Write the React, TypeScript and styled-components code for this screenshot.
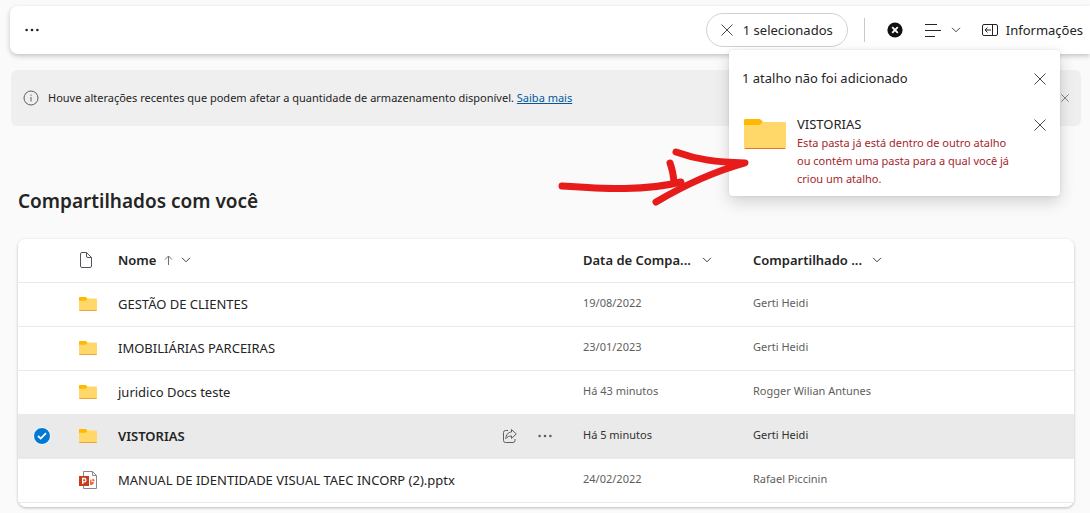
import React from "react";
import styled, { createGlobalStyle, css } from "styled-components";

const GlobalStyle = createGlobalStyle`
  * { box-sizing: border-box; }
  html { background: #fafafa; overflow-x: hidden; }
  body {
    margin: 0;
    color: #242424;
    font-family: "Segoe UI", "Noto Sans", "Open Sans", sans-serif;
    font-size: 13px;
    line-height: 20px;
  }
  button {
    border: 0;
    padding: 0;
    background: none;
    color: inherit;
    font: inherit;
    cursor: pointer;
  }
  svg { display: block; flex: none; }
`;

const Page = styled.div`
  padding: 6px 0 6px 10px;
`;

const Toolbar = styled.header`
  position: relative;
  z-index: 1;
  display: flex;
  align-items: center;
  justify-content: space-between;
  height: 48px;
  padding: 0 7px 0 14px;
  border-radius: 8px 0 0 8px;
  background: #fff;
  box-shadow: 0 2px 5px rgba(0, 0, 0, 0.22);
  white-space: nowrap;
`;

const ToolGroup = styled.div`
  display: flex;
  align-items: center;
`;

const ToolButton = styled.button<{ $gap?: number }>`
  display: flex;
  align-items: center;
  gap: ${({ $gap = 8 }) => $gap}px;
`;

const SelectionPill = styled(ToolButton)`
  height: 34px;
  padding: 0 14px;
  border: 1px solid #d1d1d1;
  border-radius: 17px;
`;

const Divider = styled.span`
  width: 1px;
  height: 24px;
  margin: 0 22px 0 16px;
  background: #c8c8c8;
`;

const ToolSet = styled(ToolGroup)`
  gap: 21px;
`;

const Popup = styled.section`
  position: absolute;
  top: 44px;
  right: 30px;
  width: 331px;
  padding: 18px 14px 8px 13px;
  border-radius: 4px;
  background: #fff;
  box-shadow: 0 6px 16px rgba(0, 0, 0, 0.16), 0 0 3px rgba(0, 0, 0, 0.1);
  white-space: normal;
`;

const PopupHeader = styled.div`
  display: flex;
  justify-content: space-between;
  align-items: flex-start;
  margin-bottom: 24px;
`;

const PopupTitle = styled.h2`
  margin: 0;
  font-size: 13px;
  font-weight: 400;
`;

const PopupItem = styled.div`
  display: flex;
  align-items: flex-start;
`;

const PopupThumb = styled.div`
  padding: 5px 0 0 2px;
`;

const PopupText = styled.div`
  flex: 1;
  min-width: 0;
  padding: 0 14px 0 11px;
`;

const ItemName = styled.p`
  margin: 0;
`;

const ErrorText = styled.p`
  margin: 0;
  color: #a4262c;
  font-size: 11px;
  line-height: 18px;
`;

const CloseButton = styled.button`
  display: flex;
  align-items: center;
  justify-content: center;
  height: 22px;
  color: #605e5c;
`;

const Arrow = styled.svg`
  position: absolute;
  top: 94px;
  left: -173px;
  pointer-events: none;
`;

const Banner = styled.aside`
  display: flex;
  align-items: center;
  gap: 9px;
  min-height: 56px;
  margin: 16px 9px 0 1px;
  padding: 0 12px;
  border-radius: 6px;
  background: #efefef;
  font-size: 11px;
  line-height: 16px;
`;

const BannerText = styled.p`
  flex: 1;
  margin: 0;
`;

const Link = styled.a`
  color: #005a9e;
  text-decoration: underline;
`;

const Title = styled.h1`
  margin: 61px 0 24px 8px;
  font-size: 19px;
  line-height: 28px;
  font-weight: 600;
`;

const Card = styled.main`
  margin: 0 16px 0 8px;
  padding-bottom: 4px;
  border-radius: 8px;
  overflow: hidden;
  background: #fff;
  box-shadow: 0 1px 3px rgba(0, 0, 0, 0.26);
`;

const Table = styled.table`
  width: 100%;
  table-layout: fixed;
  border-collapse: collapse;
  text-align: left;
`;

const Col = styled.col<{ $width?: number }>`
  ${({ $width }) => $width && css`width: ${$width}px;`}
`;

const Row = styled.tr<{ $selected?: boolean }>`
  height: 44px;
  border-bottom: 1px solid #ebebeb;
  background: ${({ $selected }) => ($selected ? "#eaeaea" : "#fff")};
  font-weight: ${({ $selected }) => ($selected ? 600 : 400)};
`;

const HeadRow = styled(Row)`
  height: 43px;
`;

const HeadCell = styled.th`
  padding: 0;
  font-weight: 600;
`;

const SortButton = styled.button`
  display: flex;
  align-items: center;
  gap: 8px;
  white-space: nowrap;
`;

const SortLabel = styled.span<{ $width?: number }>`
  ${({ $width }) => $width && css`width: ${$width}px;`}
  text-align: left;
`;

const Cell = styled.td`
  padding: 0;
`;

const NameLine = styled.div`
  display: flex;
  align-items: center;
  justify-content: space-between;
  padding-right: 30px;
  white-space: nowrap;
`;

const RowActions = styled.span`
  display: flex;
  align-items: center;
  gap: 20px;
  color: #605e5c;
`;

const MetaCell = styled(Cell)<{ $selected?: boolean }>`
  padding: 0 52px 2px 0;
  color: ${({ $selected }) => ($selected ? "#323130" : "#605e5c")};
  font-size: 11px;
  font-weight: 400;
  line-height: 18px;
  white-space: nowrap;
`;

const Clip = styled.div`
  overflow: hidden;
`;

const CheckLabel = styled.label`
  display: grid;
  width: 18px;
  height: 18px;
  margin-left: 15px;
  place-items: center;
  color: #fff;

  input, svg { grid-area: 1 / 1; }
  svg { z-index: 1; pointer-events: none; }
`;

const Checkbox = styled.input`
  appearance: none;
  width: 18px;
  height: 18px;
  margin: 0;
  border-radius: 50%;
  opacity: 0;

  &:checked {
    border: 1px solid #fff;
    background: #0078d4;
    opacity: 1;
  }
`;

const CrossIcon = ({ size = 12 }: { size?: number }) => (
  <svg width={size} height={size} viewBox="0 0 12 12" fill="none" stroke="#4a484c">
    <path d="M.5.5l11 11M11.5.5l-11 11" />
  </svg>
);

const ChevronIcon = () => (
  <svg width="10" height="6" viewBox="0 0 10 6" fill="none" stroke="#424242">
    <path d="M1 .8l4 4 4-4" />
  </svg>
);

const DotsIcon = () => (
  <svg width="16" height="4" viewBox="0 0 16 4" fill="currentColor">
    <circle cx="2.6" cy="2" r="1.3" />
    <circle cx="8" cy="2" r="1.3" />
    <circle cx="13.4" cy="2" r="1.3" />
  </svg>
);

const CircleCrossIcon = () => (
  <svg width="16" height="16" viewBox="0 0 16 16">
    <circle cx="8" cy="8" r="7.6" fill="#111" />
    <path d="M5.2 5.2l5.6 5.6M10.8 5.2l-5.6 5.6" stroke="#fff" strokeWidth="1.8" />
  </svg>
);

const ListIcon = () => (
  <svg width="17" height="14" viewBox="0 0 17 14" stroke="#242424">
    <path d="M1 1.5h12M1 7.5h16M1 13.5h10" />
  </svg>
);

const PanelIcon = () => (
  <svg width="16" height="12" viewBox="0 0 16 12" fill="none" stroke="#242424">
    <rect x=".5" y=".5" width="15" height="11" rx="1.5" />
    <path d="M8.500.5h2v11h-2M9 6H3M5.500 3.500L3 6l2.500 2.500" />
  </svg>
);

const InfoIcon = () => (
  <svg width="16" height="16" viewBox="0 0 16 16" fill="none" stroke="#605e5c">
    <circle cx="8" cy="8" r="7" />
    <path d="M8 7v4.5M8 4.6v1.2" />
  </svg>
);

const SmallFolderIcon = () => (
  <svg width="18" height="14" viewBox="0 0 18 14">
    <path d="M0 1a1 1 0 0 1 1-1h5.500L8.500 1.500H17a1 1 0 0 1 1 1V13a1 1 0 0 1-1 1H1a1 1 0 0 1-1-1z" fill="#ffd869" />
    <path d="M0 3.800V1a1 1 0 0 1 1-1h6L8.300 2 7 3.800z" fill="#ffb900" />
    <path d="M.4 13.500h17.200" stroke="#f0a23c" />
  </svg>
);

const LargeFolderIcon = () => (
  <svg width="42" height="30" viewBox="0 0 42 30">
    <path d="M0 2a2 2 0 0 1 2-2h13q2 0 4 3H41a1 1 0 0 1 1 1v24.500a1.500 1.500 0 0 1-1.500 1.500h-39A1.500 1.500 0 0 1 0 28.500z" fill="#ffd869" />
    <path d="M0 6V1.500A1.500 1.500 0 0 1 1.500 0h13c2 0 3 1.500 4.200 2.800C17.500 4.500 16.800 6 14.500 6z" fill="#ffb900" />
    <path d="M.8 29.500h40.400" stroke="#e0762a" />
  </svg>
);

const FileIcon = () => (
  <svg width="14" height="16" viewBox="0 0 14 16" fill="none" stroke="#54525a">
    <path d="M7.500.5H3A1.500 1.500 0 0 0 1.500 2v12A1.500 1.500 0 0 0 3 15.500h8A1.500 1.500 0 0 0 12.500 14V5.500zM7.500.5v3.500A1.500 1.500 0 0 0 9 5.500h3.500" />
  </svg>
);

const PowerPointIcon = () => (
  <svg width="18" height="18" viewBox="0 0 18 18">
    <path d="M4.500.5h9l4 4v13h-13z" fill="#fff" stroke="#8a8886" />
    <path d="M13.500.5v4h4" fill="none" stroke="#8a8886" />
    <path d="M12.500 8.500v2.500h2.500a3 3 0 0 1-4 2.800V8.700z" fill="#ed6c47" />
    <path d="M13.300 7.500a2.800 2.800 0 0 1 2.500 2.700h-2.500z" fill="#ed6c47" />
    <rect y="5" width="10" height="10" fill="#c43e1c" />
    <path d="M3.700 13V7.500h1.600a1.600 1.600 0 0 1 0 3.300H3.700" fill="none" stroke="#fff" strokeWidth="1.300" />
  </svg>
);

const SortUpIcon = () => (
  <svg width="9" height="10" viewBox="0 0 9 10" fill="none" stroke="#7a6a78">
    <path d="M4.500 10V1M1 4.500L4.500 1 8 4.500" />
  </svg>
);

const ShareIcon = () => (
  <svg width="14" height="14" viewBox="0 0 14 14" fill="none" stroke="currentColor" strokeLinejoin="round">
    <path d="M5 1.500H2.500a2 2 0 0 0-2 2v8a2 2 0 0 0 2 2h7.500a2 2 0 0 0 2-2V10" />
    <path d="M8.500.5L13.300 5 8.500 9.400V7C6 7 4.200 7.800 2.800 9.700 3 6 5 3.200 8.500 3z" />
  </svg>
);

const CheckIcon = () => (
  <svg width="10" height="8" viewBox="0 0 10 8" fill="none" stroke="currentColor" strokeWidth="1.800">
    <path d="M1 4l2.700 2.600L9 1.200" />
  </svg>
);

type Item = { name: string; date: string; by: string; kind: "folder" | "pptx"; selected?: boolean };

const items: Item[] = [
  { name: "GESTÃO DE CLIENTES", date: "19/08/2022", by: "Gerti Heidi", kind: "folder" },
  { name: "IMOBILIÁRIAS PARCEIRAS", date: "23/01/2023", by: "Gerti Heidi", kind: "folder" },
  { name: "juridico Docs teste", date: "Há 43 minutos", by: "Rogger Wilian Antunes", kind: "folder" },
  { name: "VISTORIAS", date: "Há 5 minutos", by: "Gerti Heidi", kind: "folder", selected: true },
  { name: "MANUAL DE IDENTIDADE VISUAL TAEC INCORP (2).pptx", date: "24/02/2022", by: "Rafael Piccinin", kind: "pptx" },
];

const ShortcutPopup = () => (
  <Popup>
    <PopupHeader>
      <PopupTitle>1 atalho não foi adicionado</PopupTitle>
      <CloseButton aria-label="Fechar"><CrossIcon /></CloseButton>
    </PopupHeader>
    <PopupItem>
      <PopupThumb><LargeFolderIcon /></PopupThumb>
      <PopupText>
        <ItemName>VISTORIAS</ItemName>
        <ErrorText>
          Esta pasta já está dentro de outro atalho ou contém uma pasta para a qual você já criou um atalho.
        </ErrorText>
      </PopupText>
      <CloseButton aria-label="Descartar VISTORIAS"><CrossIcon /></CloseButton>
    </PopupItem>
    <Arrow width="200" height="64" viewBox="0 0 200 64" fill="none" stroke="#e81b1b" strokeWidth="7" strokeLinecap="round" strokeLinejoin="round">
      <path d="M6 42C50 45 90 47 125 38M114 19Q117 27 118 38" />
      <path d="M120 8C142 16 160 18 189 19C160 27 132 39 100 58" />
    </Arrow>
  </Popup>
);

export default function App() {
  return (
    <>
      <GlobalStyle />
      <Page>
        <Toolbar>
          <ToolButton aria-label="Mais opções"><DotsIcon /></ToolButton>
          <ToolGroup>
            <SelectionPill $gap={10}><CrossIcon />1 selecionados</SelectionPill>
            <Divider />
            <ToolSet>
              <ToolButton aria-label="Cancelar"><CircleCrossIcon /></ToolButton>
              <ToolButton aria-label="Modo de exibição" $gap={10}><ListIcon /><ChevronIcon /></ToolButton>
              <ToolButton><PanelIcon />Informações</ToolButton>
            </ToolSet>
          </ToolGroup>
          <ShortcutPopup />
        </Toolbar>
        <Banner>
          <InfoIcon />
          <BannerText>
            Houve alterações recentes que podem afetar a quantidade de armazenamento disponível.{" "}
            <Link href="#saiba-mais">Saiba mais</Link>
          </BannerText>
          <CloseButton aria-label="Fechar aviso"><CrossIcon size={8} /></CloseButton>
        </Banner>
        <Title>Compartilhados com você</Title>
        <Card>
          <Table>
            <colgroup>
              <Col $width={61} />
              <Col $width={39} />
              <Col />
              <Col $width={170} />
              <Col $width={170} />
              <Col $width={151} />
            </colgroup>
            <thead>
              <HeadRow>
                <HeadCell />
                <HeadCell aria-label="Tipo"><FileIcon /></HeadCell>
                <HeadCell><SortButton><SortLabel>Nome</SortLabel><SortUpIcon /><ChevronIcon /></SortButton></HeadCell>
                <HeadCell><SortButton><SortLabel $width={111}>Data de Compa...</SortLabel><ChevronIcon /></SortButton></HeadCell>
                <HeadCell><SortButton><SortLabel $width={111}>Compartilhado ...</SortLabel><ChevronIcon /></SortButton></HeadCell>
                <HeadCell />
              </HeadRow>
            </thead>
            <tbody>
              {items.map((item) => (
                <Row key={item.name} $selected={item.selected}>
                  <Cell>
                    <CheckLabel>
                      <Checkbox type="checkbox" aria-label={item.name} defaultChecked={item.selected} />
                      {item.selected && <CheckIcon />}
                    </CheckLabel>
                  </Cell>
                  <Cell>{item.kind === "folder" ? <SmallFolderIcon /> : <PowerPointIcon />}</Cell>
                  <Cell>
                    <NameLine>
                      {item.name}
                      {item.selected && (
                        <RowActions>
                          <ToolButton aria-label="Compartilhar"><ShareIcon /></ToolButton>
                          <ToolButton aria-label="Mais ações"><DotsIcon /></ToolButton>
                        </RowActions>
                      )}
                    </NameLine>
                  </Cell>
                  <MetaCell $selected={item.selected}>{item.date}</MetaCell>
                  <MetaCell $selected={item.selected}><Clip>{item.by}</Clip></MetaCell>
                  <Cell />
                </Row>
              ))}
            </tbody>
          </Table>
        </Card>
      </Page>
    </>
  );
}
